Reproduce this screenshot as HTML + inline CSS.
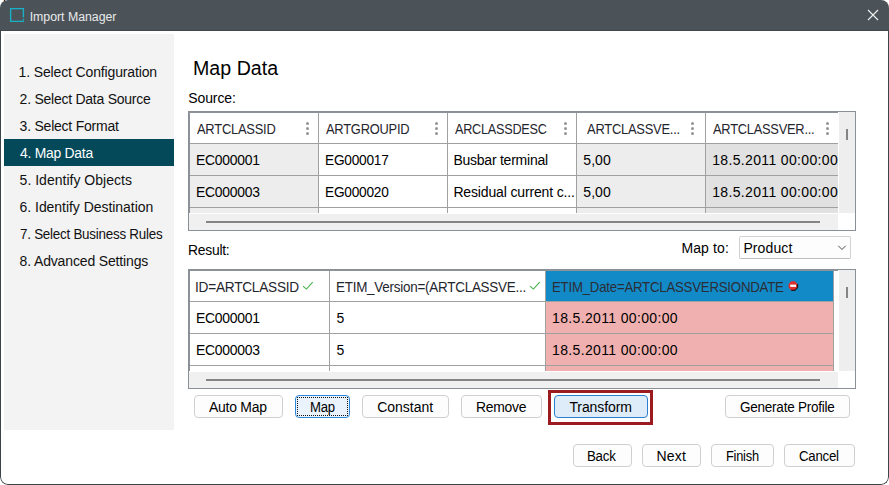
<!DOCTYPE html>
<html><head><meta charset="utf-8">
<style>
*{margin:0;padding:0;box-sizing:border-box}
html,body{width:889px;height:485px;overflow:hidden;background:#ffffff}
body{position:relative;font-family:"Liberation Sans",sans-serif;color:#000}
.a{position:absolute}
.t{position:absolute;white-space:nowrap;line-height:1}
.btn{position:absolute;height:23px;border:1px solid #d0d0d0;border-radius:4px;background:#fdfdfd}
</style></head><body>
<div class="a" style="left:0;top:0;width:889px;height:485px;border-radius:8px;background:#fff;overflow:hidden"><div class="a" style="left:0;top:0;width:889px;height:31px;background:#4b5359;border-bottom:1px solid #40474d"></div><div class="a" style="left:0;top:31px;width:889px;height:454px;border:1px solid #3d4449;border-top:none;border-radius:0 0 8px 8px"></div></div>
<svg class="a" style="left:0;top:0" width="889" height="31">
  <path d="M23.4 17.6 V8.65 H10.65 V21.35 H24.05" fill="none" stroke="#17b2c9" stroke-width="1.35"/><rect x="22.75" y="18.9" width="1.35" height="1.35" fill="#17b2c9"/>
  <path d="M868 10 L878 20 M878 10 L868 20" stroke="#f2f2f2" stroke-width="1.1"/>
</svg>
<div class="t" style="left:29.70px;top:11px;font-size:12.3px;color:#e9eaeb;letter-spacing:-0.008px;">Import Manager</div>
<div class="a" style="left:4px;top:34px;width:170px;height:396px;background:#f3f3f3;"></div>
<div class="a" style="left:4px;top:139px;width:170px;height:27px;background:#03495a;"></div>
<div class="t" style="left:18.60px;top:65px;font-size:14px;color:#111;letter-spacing:-0.143px;">1. Select Configuration</div>
<div class="t" style="left:19.60px;top:92px;font-size:14px;color:#111;letter-spacing:-0.250px;">2. Select Data Source</div>
<div class="t" style="left:19.60px;top:119px;font-size:14px;color:#111;letter-spacing:-0.228px;">3. Select Format</div>
<div class="t" style="left:19.60px;top:146px;font-size:14px;color:#fff;letter-spacing:-0.250px;transform:scaleX(0.9909);transform-origin:0 0;">4. Map Data</div>
<div class="t" style="left:19.60px;top:173px;font-size:14px;color:#111;letter-spacing:0.014px;">5. Identify Objects</div>
<div class="t" style="left:19.60px;top:200px;font-size:14px;color:#111;letter-spacing:-0.043px;">6. Identify Destination</div>
<div class="t" style="left:19.60px;top:227px;font-size:14px;color:#111;letter-spacing:-0.250px;transform:scaleX(0.9564);transform-origin:0 0;">7. Select Business Rules</div>
<div class="t" style="left:19.60px;top:254px;font-size:14px;color:#111;letter-spacing:-0.148px;">8. Advanced Settings</div>
<div class="t" style="left:193.00px;top:59px;font-size:19.6px;color:#000;letter-spacing:0.021px;">Map Data</div>
<div class="t" style="left:188.20px;top:91px;font-size:14px;color:#000;letter-spacing:-0.093px;">Source:</div>
<div class="a" style="left:188px;top:111px;width:668px;height:120px;border:1px solid #8a9096;background:#fff"></div>
<div class="a" style="left:189px;top:112px;width:649px;height:1px;background:#8e9399;"></div>
<div class="a" style="left:189px;top:112px;width:1px;height:101px;background:#8e9399;"></div>
<div class="a" style="left:190px;top:144px;width:128px;height:69px;background:#ededed;"></div>
<div class="a" style="left:577px;top:144px;width:128px;height:69px;background:#ededed;"></div>
<div class="a" style="left:706px;top:144px;width:132px;height:69px;background:#e1e1e1;"></div>
<div class="t" style="left:197.00px;top:122px;font-size:14px;color:#1f262d;letter-spacing:-0.250px;transform:scaleX(0.9215);transform-origin:0 0;">ARTCLASSID</div>
<div class="t" style="left:326.00px;top:122px;font-size:14px;color:#1f262d;letter-spacing:-0.250px;transform:scaleX(0.9204);transform-origin:0 0;">ARTGROUPID</div>
<div class="t" style="left:455.30px;top:122px;font-size:14px;color:#1f262d;letter-spacing:-0.250px;transform:scaleX(0.9031);transform-origin:0 0;">ARCLASSDESC</div>
<div class="t" style="left:587.00px;top:122px;font-size:14px;color:#1f262d;letter-spacing:-0.250px;transform:scaleX(0.9220);transform-origin:0 0;">ARTCLASSVE...</div>
<div class="t" style="left:713.20px;top:122px;font-size:14px;color:#1f262d;letter-spacing:-0.250px;transform:scaleX(0.9166);transform-origin:0 0;">ARTCLASSVER...</div>
<div class="a" style="left:305.5px;top:121.5px;width:3px;height:3px;border-radius:50%;background:#959595"></div>
<div class="a" style="left:305.5px;top:126.5px;width:3px;height:3px;border-radius:50%;background:#959595"></div>
<div class="a" style="left:305.5px;top:131.5px;width:3px;height:3px;border-radius:50%;background:#959595"></div>
<div class="a" style="left:434.5px;top:121.5px;width:3px;height:3px;border-radius:50%;background:#959595"></div>
<div class="a" style="left:434.5px;top:126.5px;width:3px;height:3px;border-radius:50%;background:#959595"></div>
<div class="a" style="left:434.5px;top:131.5px;width:3px;height:3px;border-radius:50%;background:#959595"></div>
<div class="a" style="left:563.5px;top:121.5px;width:3px;height:3px;border-radius:50%;background:#959595"></div>
<div class="a" style="left:563.5px;top:126.5px;width:3px;height:3px;border-radius:50%;background:#959595"></div>
<div class="a" style="left:563.5px;top:131.5px;width:3px;height:3px;border-radius:50%;background:#959595"></div>
<div class="a" style="left:690.5px;top:121.5px;width:3px;height:3px;border-radius:50%;background:#959595"></div>
<div class="a" style="left:690.5px;top:126.5px;width:3px;height:3px;border-radius:50%;background:#959595"></div>
<div class="a" style="left:690.5px;top:131.5px;width:3px;height:3px;border-radius:50%;background:#959595"></div>
<div class="a" style="left:825.5px;top:121.5px;width:3px;height:3px;border-radius:50%;background:#959595"></div>
<div class="a" style="left:825.5px;top:126.5px;width:3px;height:3px;border-radius:50%;background:#959595"></div>
<div class="a" style="left:825.5px;top:131.5px;width:3px;height:3px;border-radius:50%;background:#959595"></div>
<div class="t" style="left:196.21px;top:153px;font-size:14px;color:#000;letter-spacing:-0.250px;transform:scaleX(0.9917);transform-origin:0 0;">EC000001</div>
<div class="t" style="left:325.02px;top:153px;font-size:14px;color:#000;letter-spacing:-0.250px;transform:scaleX(0.9781);transform-origin:0 0;">EG000017</div>
<div class="t" style="left:453.40px;top:153px;font-size:14px;color:#000;letter-spacing:-0.238px;">Busbar terminal</div>
<div class="t" style="left:583.30px;top:153px;font-size:14px;color:#000;letter-spacing:0.046px;">5,00</div>
<div class="t" style="left:712.20px;top:153px;font-size:14px;color:#000;letter-spacing:0.345px;">18.5.2011 00:00:00</div>
<div class="t" style="left:196.21px;top:185px;font-size:14px;color:#000;letter-spacing:-0.250px;transform:scaleX(0.9917);transform-origin:0 0;">EC000003</div>
<div class="t" style="left:325.02px;top:185px;font-size:14px;color:#000;letter-spacing:-0.250px;transform:scaleX(0.9781);transform-origin:0 0;">EG000020</div>
<div class="t" style="left:453.40px;top:185px;font-size:14px;color:#000;letter-spacing:-0.150px;">Residual current c...</div>
<div class="t" style="left:583.30px;top:185px;font-size:14px;color:#000;letter-spacing:0.046px;">5,00</div>
<div class="t" style="left:712.20px;top:185px;font-size:14px;color:#000;letter-spacing:0.345px;">18.5.2011 00:00:00</div>
<div class="a" style="left:190px;top:143px;width:648px;height:1px;background:#a0a0a0;"></div>
<div class="a" style="left:190px;top:175px;width:648px;height:1px;background:#a0a0a0;"></div>
<div class="a" style="left:190px;top:207px;width:648px;height:1px;background:#a0a0a0;"></div>
<div class="a" style="left:318px;top:113px;width:1px;height:100px;background:#a0a0a0;"></div>
<div class="a" style="left:447px;top:113px;width:1px;height:100px;background:#a0a0a0;"></div>
<div class="a" style="left:576px;top:113px;width:1px;height:100px;background:#a0a0a0;"></div>
<div class="a" style="left:705px;top:113px;width:1px;height:100px;background:#a0a0a0;"></div>
<div class="a" style="left:838px;top:112px;width:1px;height:101px;background:#ffffff;"></div>
<div class="a" style="left:839px;top:112px;width:16px;height:101px;background:#eeeeee;"></div>
<div class="a" style="left:846px;top:129px;width:2px;height:11px;background:#858585;"></div>
<div class="a" style="left:189px;top:213px;width:666px;height:1px;background:#ffffff;"></div>
<div class="a" style="left:189px;top:214px;width:649px;height:16px;background:#f0f0f0;"></div>
<div class="a" style="left:838px;top:214px;width:17px;height:16px;background:#ffffff;"></div>
<div class="a" style="left:206px;top:221px;width:614px;height:2px;background:#858585;"></div>
<div class="t" style="left:188.01px;top:243px;font-size:14px;color:#000;letter-spacing:-0.250px;transform:scaleX(0.9905);transform-origin:0 0;">Result:</div>
<div class="t" style="left:681.40px;top:241px;font-size:14px;color:#000;letter-spacing:0.133px;">Map to:</div>
<div class="a" style="left:739px;top:236px;width:112px;height:23px;border:1px solid #d2d2d2;border-bottom-color:#bdbdbd;border-radius:2px;background:#fdfdfd"></div>
<div class="t" style="left:743.40px;top:241px;font-size:14px;color:#000;letter-spacing:0.107px;">Product</div>
<svg class="a" style="left:836px;top:244px" width="12" height="8"><path d="M2.3 1.8 L6 5.5 L9.7 1.8" fill="none" stroke="#3a3a3a" stroke-width="0.9"/></svg>
<div class="a" style="left:188px;top:269px;width:668px;height:120px;border:1px solid #8a9096;background:#fff"></div>
<div class="a" style="left:189px;top:270px;width:649px;height:1px;background:#8e9399;"></div>
<div class="a" style="left:189px;top:270px;width:1px;height:101px;background:#8e9399;"></div>
<div class="a" style="left:546px;top:302px;width:287px;height:69px;background:#f0b0b0;"></div>
<div class="a" style="left:546px;top:271px;width:287px;height:30px;background:#138ac8;"></div>
<div class="t" style="left:194.82px;top:280px;font-size:14px;color:#1f262d;letter-spacing:-0.250px;transform:scaleX(0.9752);transform-origin:0 0;">ID=ARTCLASSID</div>
<svg class="a" style="left:301px;top:281px" width="13" height="10"><path d="M2 5.1 L5.4 8.1 L11.7 1.2" fill="none" stroke="#46b24a" stroke-width="1.1"/></svg>
<div class="t" style="left:336.04px;top:280px;font-size:14px;color:#1f262d;letter-spacing:-0.250px;transform:scaleX(0.9594);transform-origin:0 0;">ETIM_Version=(ARTCLASSVE...</div>
<svg class="a" style="left:528px;top:281px" width="13" height="10"><path d="M2 5.1 L5.4 8.1 L11.7 1.2" fill="none" stroke="#46b24a" stroke-width="1.1"/></svg>
<div class="t" style="left:551.85px;top:280px;font-size:14px;color:#2b2d35;letter-spacing:-0.250px;transform:scaleX(0.9466);transform-origin:0 0;">ETIM_Date=ARTCLASSVERSIONDATE</div>
<svg class="a" style="left:788px;top:280px" width="12" height="12"><polygon points="3.2,1.2 6.8,1.2 9.6,4 9.6,7.6 6.8,10.4 3.2,10.4 0.6,7.6 0.6,4" fill="#dd2e2e"/><polyline points="9.6,4 9.6,7.6 6.8,10.4 3.2,10.4" fill="none" stroke="#1a1a1a" stroke-width="1.1"/><rect x="2.2" y="4.6" width="5.8" height="2.3" fill="#fff"/></svg>
<div class="t" style="left:196.01px;top:311px;font-size:14px;color:#000;letter-spacing:-0.250px;transform:scaleX(0.9948);transform-origin:0 0;">EC000001</div>
<div class="t" style="left:336.50px;top:311px;font-size:14px;color:#000;letter-spacing:0.000px;">5</div>
<div class="t" style="left:552.10px;top:311px;font-size:14px;color:#000;letter-spacing:0.345px;">18.5.2011 00:00:00</div>
<div class="t" style="left:196.01px;top:343px;font-size:14px;color:#000;letter-spacing:-0.250px;transform:scaleX(0.9948);transform-origin:0 0;">EC000003</div>
<div class="t" style="left:336.50px;top:343px;font-size:14px;color:#000;letter-spacing:0.000px;">5</div>
<div class="t" style="left:552.10px;top:343px;font-size:14px;color:#000;letter-spacing:0.345px;">18.5.2011 00:00:00</div>
<div class="a" style="left:190px;top:301px;width:644px;height:1px;background:#a0a0a0;"></div>
<div class="a" style="left:190px;top:333px;width:644px;height:1px;background:#a0a0a0;"></div>
<div class="a" style="left:190px;top:365px;width:644px;height:1px;background:#a0a0a0;"></div>
<div class="a" style="left:329px;top:271px;width:1px;height:100px;background:#a0a0a0;"></div>
<div class="a" style="left:545px;top:271px;width:1px;height:100px;background:#a0a0a0;"></div>
<div class="a" style="left:833px;top:271px;width:1px;height:100px;background:#a0a0a0;"></div>
<div class="a" style="left:838px;top:270px;width:1px;height:101px;background:#ffffff;"></div>
<div class="a" style="left:839px;top:270px;width:16px;height:101px;background:#eeeeee;"></div>
<div class="a" style="left:846px;top:287px;width:2px;height:11px;background:#858585;"></div>
<div class="a" style="left:189px;top:371px;width:666px;height:1px;background:#ffffff;"></div>
<div class="a" style="left:189px;top:372px;width:649px;height:16px;background:#f0f0f0;"></div>
<div class="a" style="left:838px;top:372px;width:17px;height:16px;background:#ffffff;"></div>
<div class="a" style="left:206px;top:379px;width:614px;height:2px;background:#858585;"></div>
<div class="btn" style="left:194px;top:395px;width:89px;"></div>
<div class="t" style="left:208.90px;top:400px;font-size:14px;color:#000;letter-spacing:-0.250px;transform:scaleX(0.9951);transform-origin:0 0;">Auto Map</div>
<div class="btn" style="left:295px;top:395px;width:55px;border-color:#2b88d8;background:#eaf3fc"></div>
<div class="t" style="left:309.56px;top:400px;font-size:14px;color:#000;letter-spacing:-0.250px;transform:scaleX(0.9365);transform-origin:0 0;">Map</div>
<div class="a" style="left:297px;top:397px;width:51px;height:19px;border:1px dotted #111"></div>
<div class="btn" style="left:362px;top:395px;width:87px;"></div>
<div class="t" style="left:377.30px;top:400px;font-size:14px;color:#000;letter-spacing:-0.035px;">Constant</div>
<div class="btn" style="left:461px;top:395px;width:81px;"></div>
<div class="t" style="left:475.81px;top:400px;font-size:14px;color:#000;letter-spacing:-0.250px;transform:scaleX(0.9921);transform-origin:0 0;">Remove</div>
<div class="a" style="left:548px;top:390px;width:105px;height:35px;border:3px solid #9b1b21"></div>
<div class="btn" style="left:554px;top:395px;width:94px;border-color:#2b7fd0;background:#deebf8"></div>
<div class="t" style="left:569.40px;top:400px;font-size:14px;color:#000;letter-spacing:-0.101px;">Transform</div>
<div class="btn" style="left:725px;top:395px;width:125px;"></div>
<div class="t" style="left:740.00px;top:400px;font-size:14px;color:#000;letter-spacing:-0.250px;transform:scaleX(0.9654);transform-origin:0 0;">Generate Profile</div>
<div class="btn" style="left:573px;top:444px;width:59px;"></div>
<div class="t" style="left:587.45px;top:449px;font-size:14px;color:#000;letter-spacing:-0.250px;transform:scaleX(0.9482);transform-origin:0 0;">Back</div>
<div class="btn" style="left:642px;top:444px;width:59px;"></div>
<div class="t" style="left:656.60px;top:449px;font-size:14px;color:#000;letter-spacing:0.168px;">Next</div>
<div class="btn" style="left:711px;top:444px;width:63px;"></div>
<div class="t" style="left:725.68px;top:449px;font-size:14px;color:#000;letter-spacing:-0.250px;transform:scaleX(0.9152);transform-origin:0 0;">Finish</div>
<div class="btn" style="left:784px;top:444px;width:71px;"></div>
<div class="t" style="left:799.30px;top:449px;font-size:14px;color:#000;letter-spacing:-0.250px;transform:scaleX(0.9451);transform-origin:0 0;">Cancel</div>
<div class="a" style="left:3px;top:0px;width:1px;height:1px;background:#f2d58a;"></div>
<div class="a" style="left:4px;top:0px;width:1px;height:1px;background:#5a1414;"></div>
<div class="a" style="left:5px;top:0px;width:1px;height:1px;background:#7aa9d0;"></div>
<div class="a" style="left:6px;top:0px;width:1px;height:1px;background:#8c9094;"></div>
</body></html>
